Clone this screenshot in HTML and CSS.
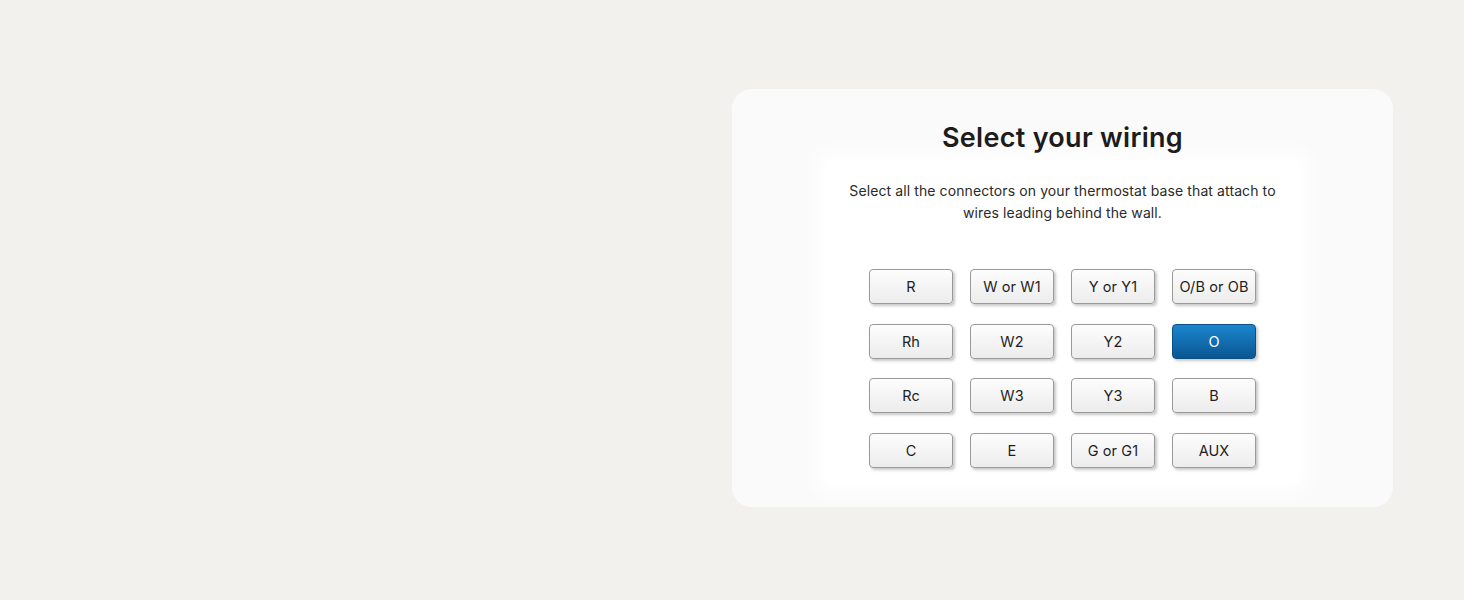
FILE: index.html
```html
<!DOCTYPE html>
<html lang="en">
<head>
    <meta charset="UTF-8">
    <title>Select your wiring</title>
    <link rel="stylesheet" href="styles.css">
</head>
<body>

<div class="page">
    <div class="card">
        <h1 class="title">Select your wiring</h1>

        <div class="panel">
            <p class="intro">Select all the connectors on your thermostat base that attach to wires leading behind the wall.</p>

            <!-- Bornes du socle, 4 colonnes -->
            <div class="terminals">
                <button class="terminal">R</button>
                <button class="terminal">W or W1</button>
                <button class="terminal">Y or Y1</button>
                <button class="terminal">O/B or OB</button>

                <button class="terminal">Rh</button>
                <button class="terminal">W2</button>
                <button class="terminal">Y2</button>
                <button class="terminal selected">O</button>

                <button class="terminal">Rc</button>
                <button class="terminal">W3</button>
                <button class="terminal">Y3</button>
                <button class="terminal">B</button>

                <button class="terminal">C</button>
                <button class="terminal">E</button>
                <button class="terminal">G or G1</button>
                <button class="terminal">AUX</button>
            </div>
        </div>
    </div>
</div>

<script>
    // Sélection / désélection d'une borne
    document.querySelectorAll(".terminal").forEach(btn => {
        btn.addEventListener("click", () => btn.classList.toggle("selected"));
    });
</script>

</body>
</html>
```

FILE: styles.css
```css
body {
    margin: 0;
    background-color: #f2f1ed;
    font-family: Inter, "Noto Sans", sans-serif;
    color: #222;
}

.page {
    display: flex;
    justify-content: flex-end;
    padding: 89px 71px 0 0;
    height: 600px;
    box-sizing: border-box;
}

.card {
    width: 661px;
    height: 418px;
    box-sizing: border-box;
    padding-top: 29px;
    background-color: #fafafa;
    border-radius: 20px;
    display: flex;
    flex-direction: column;
    align-items: center;
}

.title {
    position: relative;
    z-index: 1; /* au-dessus du halo du panneau */
    margin: 0;
    font-size: 27px;
    line-height: 40px;
    font-weight: 600;
    letter-spacing: 0.3px;
    color: #1c1c1c;
}

.panel {
    margin-top: 2px;
    width: 475px;
    box-sizing: border-box;
    padding: 20px 0 16px;
    background-color: #fff;
    box-shadow: 0 0 20px 8px #fff; /* bord adouci */
    display: flex;
    flex-direction: column;
    align-items: center;
}

.intro {
    margin: 0;
    max-width: 450px;
    font-size: 14px;
    line-height: 22px;
    letter-spacing: 0.1px;
    text-align: center;
    color: #2a2a2a;
}

.terminals {
    margin-top: 45px;
    display: grid;
    grid-template-columns: repeat(4, 84px);
    grid-auto-rows: 35px;
    column-gap: 17px;
    row-gap: 19.7px;
}

.terminal {
    font-family: inherit;
    font-size: 14.5px;
    letter-spacing: 0.1px;
    color: #1e1e1e;
    padding: 0;
    border: 1px solid #9a9a9a;
    border-radius: 4px;
    background: linear-gradient(#fdfdfd, #ececec);
    box-shadow: 2px 2px 3px rgba(0, 0, 0, 0.22);
    cursor: pointer;
    white-space: nowrap;
}

.terminal.selected {
    color: #fff;
    border-color: #0b4f86;
    background: linear-gradient(#1b86cf, #0a5592);
}
```
